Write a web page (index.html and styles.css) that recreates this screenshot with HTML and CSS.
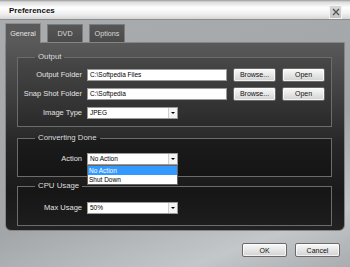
FILE: index.html
```html
<!DOCTYPE html>
<html lang="en">
<head>
    <meta charset="UTF-8">
    <title>Preferences</title>
    <link rel="stylesheet" href="styles.css">
</head>
<body>
    <div class="window">
        <div class="titlebar">
            <span class="title">Preferences</span>
            <span class="close">
                <svg width="8" height="8" viewBox="0 0 8 8"><path d="M1 1L7 7M7 1L1 7" stroke="#555" stroke-width="1.4"/></svg>
            </span>
        </div>

        <div class="tabs">
            <div class="tab active">General</div>
            <div class="tab">DVD</div>
            <div class="tab">Options</div>
        </div>

        <div class="panel">
            <fieldset class="group group-output">
                <legend>Output</legend>
                <div class="row">
                    <label>Output Folder</label>
                    <div class="field">C:\Softpedia Files</div>
                    <button class="btn">Browse...</button>
                    <button class="btn">Open</button>
                </div>
                <div class="row">
                    <label>Snap Shot Folder</label>
                    <div class="field">C:\Softpedia</div>
                    <button class="btn">Browse...</button>
                    <button class="btn">Open</button>
                </div>
                <div class="row">
                    <label>Image Type</label>
                    <div class="select"><span>JPEG</span><span class="arrow"></span></div>
                </div>
            </fieldset>

            <fieldset class="group group-convert">
                <legend>Converting Done</legend>
                <div class="row">
                    <label>Action</label>
                    <div class="select open">
                        <span>No Action</span><span class="arrow"></span>
                        <ul class="dropdown">
                            <li class="selected">No Action</li>
                            <li>Shut Down</li>
                        </ul>
                    </div>
                </div>
            </fieldset>

            <fieldset class="group group-cpu">
                <legend>CPU Usage</legend>
                <div class="row">
                    <label>Max Usage</label>
                    <div class="select"><span>50%</span><span class="arrow"></span></div>
                </div>
            </fieldset>
        </div>

        <div class="footer">
            <button class="btn btn-wide">OK</button>
            <button class="btn btn-wide">Cancel</button>
        </div>
    </div>
</body>
</html>
```

FILE: styles.css
```css
body {
    margin: 0;
    font-family: "Liberation Sans", Arial, sans-serif;
    background: #a4a8ab;
}
.window {
    width: 350px;
    height: 267px;
    overflow: hidden;
    background: linear-gradient(160deg, #a9adb0 0%, #a2a6a9 60%, #c4c7c9 85%, #a9adaf 100%);
}
.titlebar {
    height: 19px;
    display: flex;
    align-items: center;
    justify-content: space-between;
    padding: 0 9px;
    background: linear-gradient(#9a9a9a 0, #dcdcdc 2px, #ffffff 40%, #f2f2f2 70%, #d6d6d6 100%);
    border-bottom: 1px solid #8c8c8c;
}
.title {
    font-weight: bold;
    font-size: 8px;
    color: #111;
    padding-top: 2px;
}
.close {
    width: 13px;
    height: 14px;
    margin-right: -1px;
    margin-top: 5px;
    display: flex;
    align-items: center;
    justify-content: center;
    border: 1px solid #f4f4f4;
    background: linear-gradient(#d8d8d8, #c4c4c4);
    box-sizing: border-box;
}
.tabs {
    display: flex;
    gap: 6px;
    padding: 3px 0 0 5px;
    height: 19px;
    position: relative;
    z-index: 1;
}
.tab {
    width: 36px;
    height: 18px;
    box-sizing: border-box;
    margin-top: 1px;
    border: 1px solid #7c7c7c;
    border-bottom: none;
    background: linear-gradient(#565656, #4a4a4a);
    color: #d8d8d8;
    font-size: 7.2px;
    display: flex;
    align-items: center;
    justify-content: center;
}
.tab.active {
    height: 20px;
    margin-top: 0;
    background: #5a5a5a;
    border-color: #8e8e8e;
    color: #e4e4e4;
}
.panel {
    margin: 0 5px;
    height: 189px;
    box-sizing: border-box;
    border: 1px solid #858585;
    border-radius: 0 0 6px 6px;
    background: linear-gradient(#595959 0%, #3e3e3e 30%, #262626 55%, #1a1a1a 80%, #222 100%);
    padding: 9px 12px 0 11px;
}
.group {
    margin: 0;
    padding: 0 0 8px 0;
    border: 1px solid #6c6c6c;
    background: rgba(0, 0, 0, 0.12);
}
.group legend {
    margin-left: 17px;
    padding: 0 3px;
    font-size: 7.8px;
    line-height: 10px;
    color: #dcdcdc;
}
.group-output {
    padding-top: 6px;
    padding-bottom: 7px;
}
.group-convert {
    margin-top: 6px;
    padding-top: 9px;
    padding-bottom: 11px;
    background: rgba(0, 0, 0, 0.3);
}
.group-cpu {
    margin-top: 4px;
    padding-top: 10px;
    padding-bottom: 11px;
}
.row {
    display: flex;
    align-items: center;
    height: 13px;
    margin-bottom: 6px;
}
.row:last-child {
    margin-bottom: 0;
}
.row label {
    width: 64px;
    margin-right: 5px;
    text-align: right;
    font-size: 7.5px;
    color: #e2e2e2;
}
.field, .select {
    height: 12px;
    box-sizing: border-box;
    background: #fff;
    border: 1px solid #9a9a9a;
    font-size: 6.5px;
    color: #000;
    display: flex;
    align-items: center;
    padding-left: 2px;
}
.field {
    width: 140px;
    margin-right: 6px;
}
.select {
    width: 91px;
    position: relative;
    justify-content: space-between;
    padding-right: 0;
}
.arrow {
    width: 8px;
    height: 10px;
    border-left: 1px solid #d0d0d0;
    background: #f4f4f4;
    position: relative;
}
.arrow::after {
    content: "";
    position: absolute;
    left: 2px;
    top: 4px;
    border-left: 2px solid transparent;
    border-right: 2px solid transparent;
    border-top: 2px solid #000;
}
.dropdown {
    position: absolute;
    top: 11px;
    left: -1px;
    width: 91px;
    box-sizing: border-box;
    margin: 0;
    padding: 0;
    list-style: none;
    background: #fff;
    border: 1px solid #666;
    z-index: 2;
}
.dropdown li {
    height: 9px;
    line-height: 9px;
    padding-left: 1px;
    font-size: 6.5px;
    color: #000;
}
.dropdown li.selected {
    background: #3399ff;
    color: #fff;
}
.btn {
    width: 43px;
    height: 14px;
    margin-right: 6px;
    padding: 0;
    box-sizing: border-box;
    border: 1px solid #6a6a6a;
    border-radius: 2px;
    background: linear-gradient(#fafafa, #e6e6e6 50%, #d2d2d2);
    box-shadow: inset 0 0 0 1px rgba(255, 255, 255, 0.7);
    font-family: "Liberation Sans", Arial, sans-serif;
    font-size: 7px;
    color: #111;
}
.footer {
    display: flex;
    justify-content: flex-end;
    gap: 8px;
    padding: 12px 10px 0 0;
}
.btn-wide {
    width: 45px;
    margin-right: 0;
}
```
